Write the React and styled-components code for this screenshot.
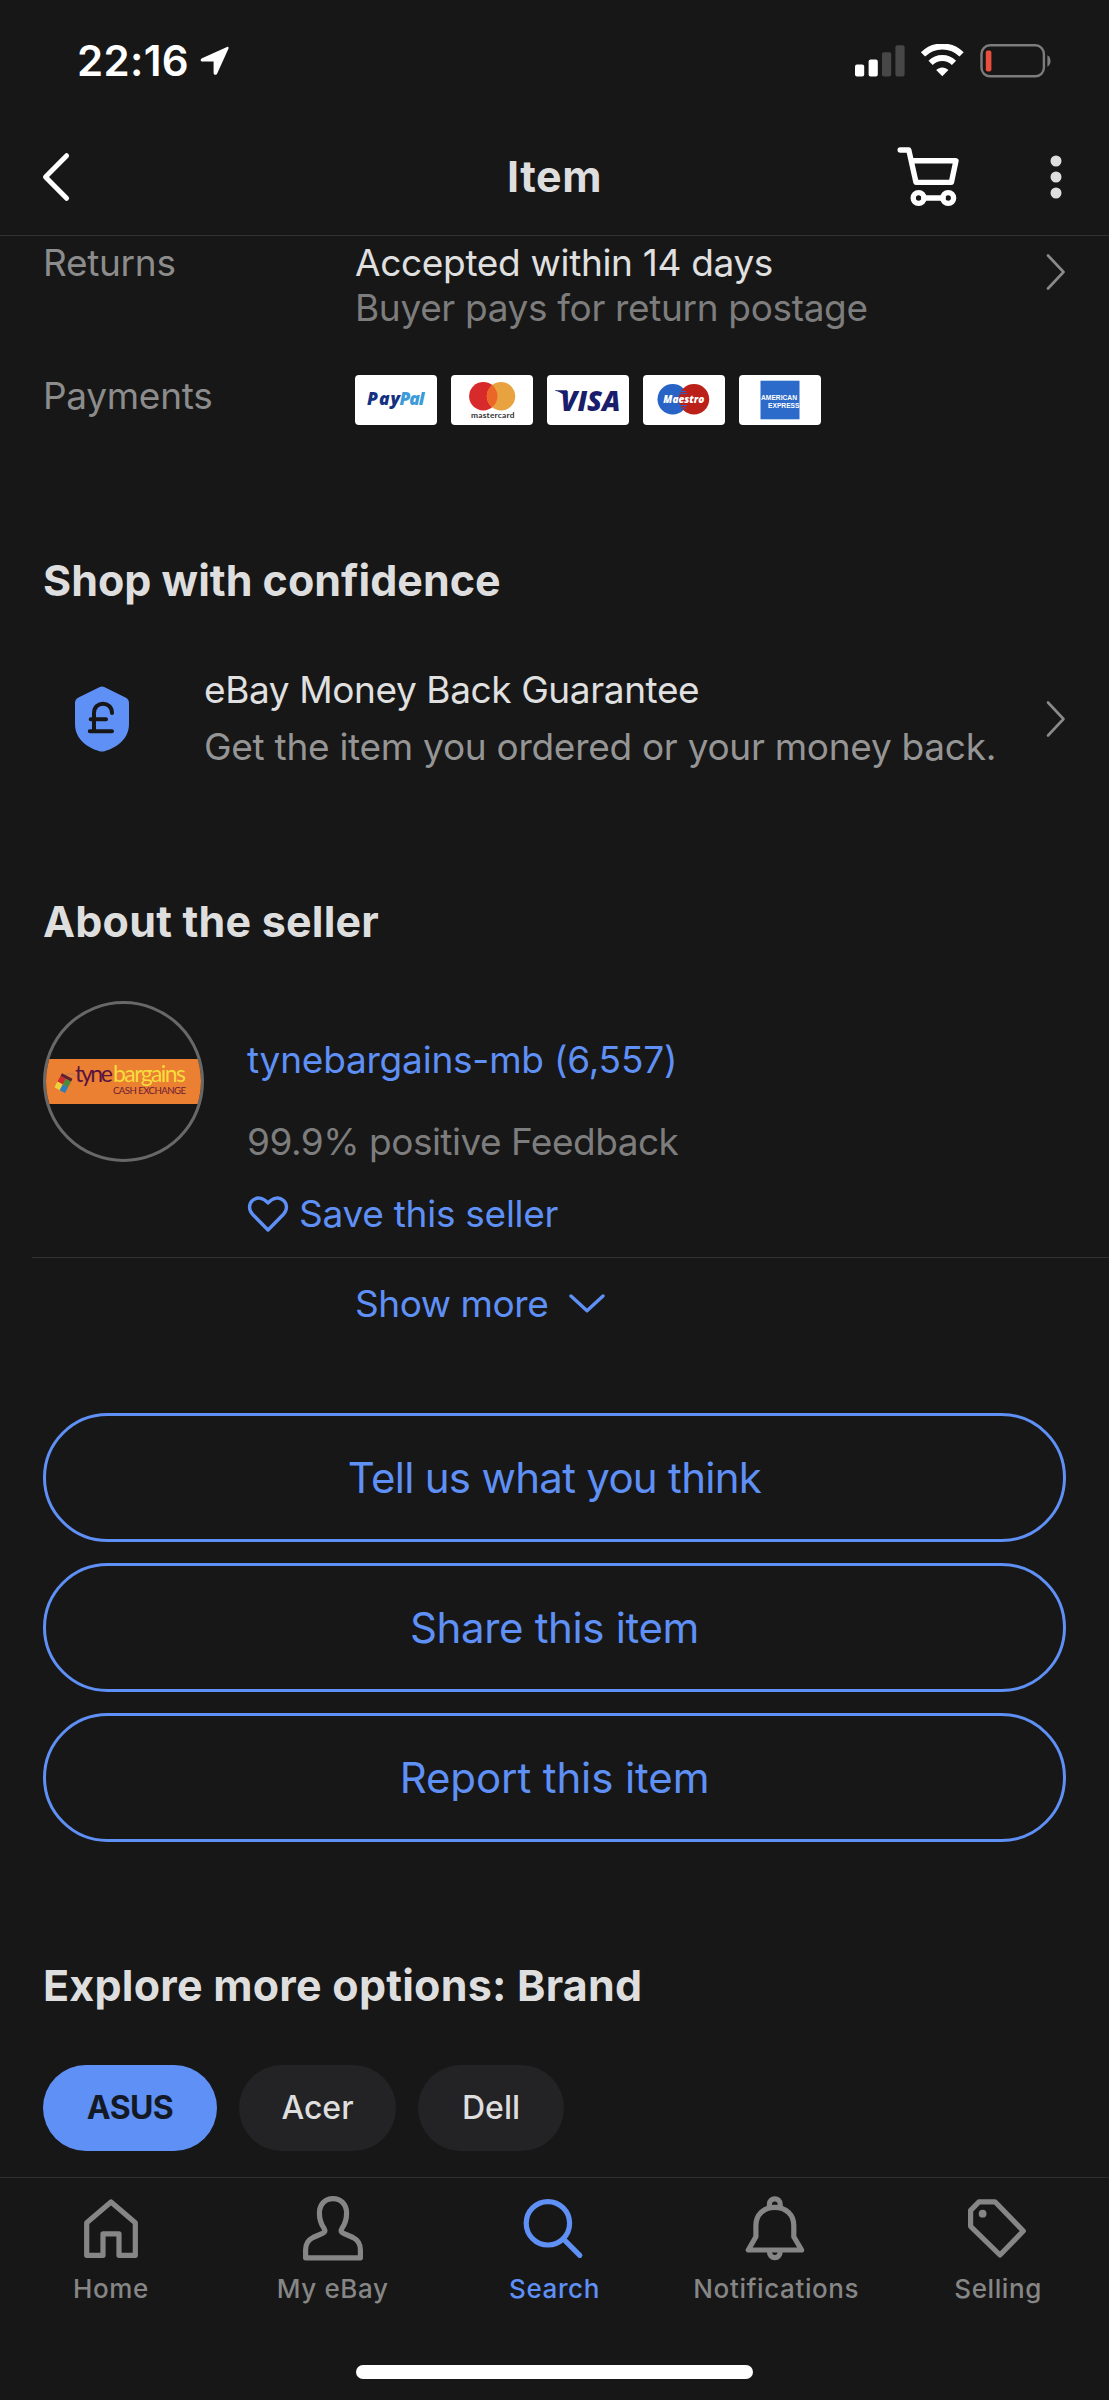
import React, { Component } from "react";
import styled, { createGlobalStyle } from "styled-components";

const blue = "#5f90f6";

const tabs = [
  { name: "Home" },
  { name: "My eBay" },
  { name: "Search", active: true },
  { name: "Notifications" },
  { name: "Selling" }
];

const brands = [
  { name: "ASUS", width: "174px", active: true },
  { name: "Acer", width: "157px" },
  { name: "Dell", width: "146px" }
];

const Chevron = () => (
  <svg width="20" height="38" viewBox="0 0 20 38" fill="none">
    <path
      d="M2 2.5L17.5 19L2 35.5"
      stroke="#8a8a8a"
      strokeWidth="2.6"
      strokeLinecap="round"
      strokeLinejoin="round"
    />
  </svg>
);

const TabIcon = ({ name }) => (
  <svg
    width="72"
    height="72"
    viewBox="0 0 72 72"
    fill="none"
    stroke="currentColor"
    strokeWidth="5.2"
    strokeLinecap="round"
    strokeLinejoin="round"
  >
    {name === "Home" && (
      <path d="M36 10L60.3 30.8V63.3H44V41.8H28V63.3H11.7V30.8Z" />
    )}
    {name === "My eBay" && (
      <path d="M36 6.6C28 6.6 22.4 12.5 22.4 21C22.4 28 24.3 32.5 27 36.3C28.6 38.8 28 40.2 25.5 41.3L16 45.5C11 48 8.6 52 8.6 58V65.8H63.4V58C63.4 52 61 48 56 45.5L46.5 41.3C44 40.2 43.4 38.8 45 36.3C47.7 32.5 49.6 28 49.6 21C49.6 12.5 44 6.6 36 6.6Z" />
    )}
    {name === "Search" && (
      <>
        <circle cx="29.9" cy="31.3" r="21.7" />
        <path d="M45.8 47.3L61.8 63.3" />
      </>
    )}
    {name === "Notifications" && (
      <>
        <path d="M34.8 15.3C23.5 15.3 15.9 23 15.9 33.5V44.8L8.3 58H61.6L53.8 44.8V33.5C53.8 23 46 15.3 34.8 15.3Z" />
        <path d="M29.4 14V12.2C29.4 5 40.2 5 40.2 12.2V14M29.4 59.5C29.4 67.6 40.2 67.6 40.2 59.5" />
      </>
    )}
    {name === "Selling" && (
      <>
        <path d="M17 9.8H33L61.3 39L38 63L8.6 34.3V18.3Z" />
        <circle cx="20.6" cy="21.7" r="3.9" fill="currentColor" stroke="none" />
      </>
    )}
  </svg>
);

const Cards = () => (
  <CardList>
    <Card viewBox="0 0 82 50">
      <text x="12" y="30" fontSize="17.5" textLength="33" fill="#143182">
        Pay
      </text>
      <text x="44.5" y="30" fontSize="17.5" textLength="25" fill="#3c9bd8">
        Pal
      </text>
    </Card>
    <Card viewBox="0 0 82 50">
      <circle cx="32.3" cy="21.2" r="14.2" fill="#d92a2b" />
      <circle cx="50" cy="21.2" r="14.2" fill="#e8a23f" />
      <path
        d="M41.15 10.1A14.2 14.2 0 0 1 41.15 32.3A14.2 14.2 0 0 1 41.15 10.1Z"
        fill="#ec6627"
      />
      <SmallMark x="20" y="42.6" textLength="43.5">
        mastercard
      </SmallMark>
    </Card>
    <Card viewBox="0 0 82 50">
      <path d="M8 15.3H20V19H15.5C13.5 17.3 11 16.2 8 15.7Z" fill="#1a1c6c" />
      <text
        x="13.5"
        y="35.5"
        fontSize="28"
        textLength="60"
        lengthAdjust="spacingAndGlyphs"
        fill="#1a1c6c"
      >
        VISA
      </text>
    </Card>
    <Card viewBox="0 0 82 50">
      <circle cx="29.7" cy="24.3" r="15.2" fill="#2863c6" />
      <circle cx="51" cy="24.3" r="15.2" fill="#bb2118" />
      <path
        d="M37 16.5H43M36 18.7H44M36 30.5H44M37 33H43"
        stroke="#2863c6"
        strokeWidth="1"
      />
      <text
        x="20.3"
        y="28"
        fontSize="11"
        textLength="41"
        lengthAdjust="spacingAndGlyphs"
        fill="#fff"
      >
        Maestro
      </text>
    </Card>
    <Card viewBox="0 0 82 50">
      <rect x="21.5" y="5.7" width="39" height="38.6" fill="#2c6bc9" />
      <AmexMark x="22" y="24.5" textLength="36" lengthAdjust="spacingAndGlyphs">
        AMERICAN
      </AmexMark>
      <AmexMark x="29" y="32.5" textLength="31.5" lengthAdjust="spacingAndGlyphs">
        EXPRESS
      </AmexMark>
    </Card>
  </CardList>
);

class App extends Component {
  render() {
    return (
      <Page>
        <GlobalStyle />
        <StatusBar>
          <Clock>
            22:16
            <svg width="30" height="30" viewBox="0 0 30 30">
              <path
                d="M27 1L2 12.2C0 13.2 0.3 15.6 2.6 15.6H13.6V26.8C13.6 29.2 16.2 29.6 17.2 27.4L28.4 2.8C29 1.4 28.2 0.5 27 1Z"
                fill="#fff"
              />
            </svg>
          </Clock>
          <svg width="197" height="34" viewBox="0 0 197 34">
            <rect x="1" y="20.5" width="9.2" height="12" rx="2" fill="#fff" />
            <rect x="14.6" y="15.4" width="9.2" height="17" rx="2" fill="#fff" />
            <rect x="28" y="8.2" width="9.2" height="24.3" rx="2" fill="#474747" />
            <rect x="41.4" y="1.2" width="9.2" height="31.3" rx="2" fill="#474747" />
            <g fill="none" stroke="#fff" strokeWidth="6">
              <path d="M69 10.4A27.5 27.5 0 0 1 107.6 10.4" />
              <path d="M76.6 18.9A16.6 16.6 0 0 1 100 18.9" />
            </g>
            <path
              d="M88.3 32.3L82.2 26C85.6 22.6 91 22.6 94.4 26Z"
              fill="#fff"
            />
            <rect
              x="127.5"
              y="1.3"
              width="62.4"
              height="31"
              rx="8.5"
              fill="none"
              stroke="#7c7c7c"
              strokeWidth="2.4"
            />
            <rect x="131.8" y="6.5" width="5.6" height="21" rx="2" fill="#e84f3d" />
            <path d="M193.4 11.3C197.6 13.3 197.6 20.7 193.4 22.7Z" fill="#7c7c7c" />
          </svg>
        </StatusBar>
        <Header>
          <HeaderSide>
            <svg width="30" height="50" viewBox="0 0 30 50" fill="none">
              <path
                d="M25.6 3.7L4.5 25L25.6 46.3"
                stroke="#fff"
                strokeWidth="5"
                strokeLinecap="round"
                strokeLinejoin="round"
              />
            </svg>
          </HeaderSide>
          <Title>Item</Title>
          <HeaderSide $end>
            <svg
              width="62"
              height="60"
              viewBox="0 0 62 60"
              fill="none"
              stroke="#fff"
              strokeWidth="5.4"
              strokeLinecap="round"
              strokeLinejoin="round"
            >
              <path d="M3.2 3H11.8L19 35.4H54.4L59 13.8H14.5" />
              <path d="M27 51H46" />
              <circle cx="21.6" cy="51" r="5.4" />
              <circle cx="51.2" cy="51" r="5.4" />
            </svg>
            <svg width="12" height="46" viewBox="0 0 12 46" fill="#dedede">
              <circle cx="6" cy="7" r="5.5" />
              <circle cx="6" cy="23" r="5.5" />
              <circle cx="6" cy="39" r="5.5" />
            </svg>
          </HeaderSide>
        </Header>

        <Content>
          <DetailRow>
            <Label>Returns</Label>
            <DetailText>
              <Line $color="#e0e0e0" $spacing="-0.32px">
                Accepted within 14 days
              </Line>
              <Line $color="#7d7d7d" $spacing="-0.34px">
                Buyer pays for return postage
              </Line>
            </DetailText>
            <Chevron />
          </DetailRow>
          <DetailRow $payments>
            <Label>Payments</Label>
            <Cards />
          </DetailRow>

          <Heading $top="128px">Shop with confidence</Heading>
          <Guarantee>
            <svg width="54" height="66" viewBox="0 0 54 66" fill="none">
              <path
                d="M24.8 1.1Q27 0 29.2 1.1L50.5 11.5Q54 13.3 54 17V38C54 51.5 44 61 29.5 65.2Q27 66 24.5 65.2C10 61 0 51.5 0 38V17Q0 13.3 3.5 11.5Z"
                fill={blue}
              />
              <path
                d="M37 27C37 14.5 19 14.5 19 27V45.3M15.7 33.3H31M14.8 45.3H37"
                stroke="#171717"
                strokeWidth="4"
                strokeLinecap="round"
              />
            </svg>
            <GuaranteeText>
              <Line $height="56px" $color="#e0e0e0" $spacing="-0.4px">
                eBay Money Back Guarantee
              </Line>
              <Line $height="57px" $color="#959595" $spacing="-0.28px">
                Get the item you ordered or your money back.
              </Line>
            </GuaranteeText>
            <Chevron />
          </Guarantee>

          <Heading $top="119px" $spacing="0.2px">
            About the seller
          </Heading>
          <Seller>
            <Avatar>
              <svg width="155" height="45" viewBox="0 0 155 45">
                <rect width="155" height="45" fill="#eb7f32" />
                <path
                  d="M15 22C17 14 27 12 33 20"
                  fill="none"
                  stroke="#c97b52"
                  strokeWidth="1.5"
                />
                <g transform="rotate(28 17 25)">
                  <rect x="11" y="19" width="6" height="6.5" fill="#d02b2b" />
                  <rect x="17" y="19" width="6" height="6.5" fill="#4a8a3c" />
                  <rect x="11" y="25.5" width="6" height="6.5" fill="#ecd23c" />
                  <rect x="17" y="25.5" width="6" height="6.5" fill="#2f7dbb" />
                  <rect x="11" y="16" width="12" height="3" fill="#5d2035" />
                </g>
                <LogoText x="29" y="23" fontSize="23" textLength="38" fill="#5a1440">
                  tyne
                </LogoText>
                <LogoText x="67" y="23" fontSize="23" textLength="73" fill="#f6dc3c">
                  bargains
                </LogoText>
                <LogoText x="67" y="35" fontSize="9.6" textLength="73" fill="#6b1c35">
                  CASH EXCHANGE
                </LogoText>
              </svg>
            </Avatar>
            <SellerInfo>
              <Line $height="46px" $color={blue} $spacing="-0.22px">
                tynebargains-mb (6,557)
              </Line>
              <Line $height="46px" $color="#7d7d7d" $spacing="-0.5px">
                99.9% positive Feedback
              </Line>
              <SaveSeller>
                <svg width="42" height="38" viewBox="0 0 42 38" fill="none">
                  <path
                    d="M21 35L5.5 19.2C-3.5 9.5 10 -4.5 21 8C32 -4.5 45.5 9.5 36.5 19.2Z"
                    stroke={blue}
                    strokeWidth="3.4"
                    strokeLinejoin="round"
                  />
                </svg>
                <Line $height="46px" $color={blue} $spacing="-0.26px">
                  Save this seller
                </Line>
              </SaveSeller>
            </SellerInfo>
          </Seller>
          <Divider />
          <ShowMore>
            <Line $height="46px" $color={blue} $spacing="-0.45px">
              Show more
            </Line>
            <svg width="36" height="20" viewBox="0 0 36 20" fill="none">
              <path
                d="M2 2L18 16.8L34 2"
                stroke={blue}
                strokeWidth="3.4"
                strokeLinecap="round"
                strokeLinejoin="round"
              />
            </svg>
          </ShowMore>

          <ButtonList>
            <OutlineButton $spacing="-0.7px">Tell us what you think</OutlineButton>
            <OutlineButton $spacing="-0.35px">Share this item</OutlineButton>
            <OutlineButton $spacing="-0.1px">Report this item</OutlineButton>
          </ButtonList>

          <Heading $top="116px" $spacing="0.23px">
            Explore more options: Brand
          </Heading>
          <BrandList>
            {brands.map(brand => (
              <Brand key={brand.name} $width={brand.width} $active={brand.active}>
                {brand.name}
              </Brand>
            ))}
          </BrandList>
        </Content>

        <TabBar>
          {tabs.map(tab => (
            <Tab key={tab.name} $active={tab.active}>
              <TabIcon name={tab.name} />
              {tab.name}
            </Tab>
          ))}
        </TabBar>
        <HomeIndicator />
      </Page>
    );
  }
}

const GlobalStyle = createGlobalStyle`
  * {
    box-sizing: border-box;
  }
  body {
    margin: 0;
    background-color: #171717;
  }
  svg {
    display: block;
    flex-shrink: 0;
  }
`;

const Page = styled.div`
  display: flex;
  flex-direction: column;
  width: 1109px;
  height: 2400px;
  overflow: hidden;
  background-color: #171717;
  font-family: Inter, "Liberation Sans", sans-serif;
`;

const StatusBar = styled.div`
  display: flex;
  justify-content: space-between;
  align-items: center;
  height: 118px;
  padding: 3px 58px 0 77px;
`;

const Clock = styled.div`
  display: flex;
  align-items: center;
  gap: 11px;
  color: #ffffff;
  font-size: 42px;
  font-weight: 600;
  line-height: 50px;
  letter-spacing: 0.3px;
`;

const Header = styled.header`
  display: flex;
  justify-content: space-between;
  align-items: center;
  height: 118px;
  padding: 0 47px 0 41px;
  border-bottom: 1px solid #323232;
`;

const HeaderSide = styled.div`
  display: flex;
  justify-content: ${props => (props.$end ? "flex-end" : "flex-start")};
  align-items: center;
  gap: 91px;
  flex: 1 1 0;
`;

const Title = styled.h1`
  margin: 0 -6px 1px 0;
  color: #dedede;
  font-size: 43px;
  font-weight: 700;
  line-height: 54px;
  letter-spacing: 0.5px;
`;

const Content = styled.main`
  flex: 1;
  padding: 4px 43px 0;
`;

const DetailRow = styled.div`
  display: flex;
  align-items: ${props => (props.$payments ? "flex-end" : "flex-start")};
  height: ${props => (props.$payments ? "52px" : "90px")};
  margin-top: ${props => (props.$payments ? "43px" : "0")};

  > svg {
    margin-top: 13px;
  }
`;

const Label = styled.div`
  align-self: flex-start;
  width: 312px;
  color: #8c8c8c;
  font-size: 37px;
  line-height: 45px;
  letter-spacing: -0.3px;
`;

const DetailText = styled.div`
  flex: 1;
`;

const Line = styled.div`
  color: ${props => props.$color};
  font-size: 37px;
  line-height: ${props => props.$height || "45px"};
  letter-spacing: ${props => props.$spacing};
  white-space: nowrap;
`;

const CardList = styled.div`
  display: flex;
  gap: 14px;
`;

const Card = styled.svg`
  width: 82px;
  height: 50px;
  border-radius: 4px;
  background-color: #ffffff;
  font-family: "Open Sans", sans-serif;
  font-weight: 800;
  font-style: italic;
`;

const SmallMark = styled.text`
  fill: #333333;
  font-family: Lato, sans-serif;
  font-size: 8.4px;
  font-style: normal;
  font-weight: 700;
`;

const AmexMark = styled.text`
  fill: #ffffff;
  font-family: "Liberation Sans", sans-serif;
  font-size: 7.4px;
  font-style: normal;
  font-weight: 700;
`;

const LogoText = styled.text`
  font-family: Lato, sans-serif;
`;

const Heading = styled.h2`
  margin: ${props => props.$top} 0 0;
  color: #dedede;
  font-size: 43px;
  font-weight: 700;
  line-height: 54px;
  letter-spacing: ${props => props.$spacing || "0"};
  white-space: nowrap;
`;

const Guarantee = styled.div`
  display: flex;
  align-items: center;
  height: 113px;
  margin-top: 55px;
  padding-left: 32px;
`;

const GuaranteeText = styled.div`
  flex: 1;
  margin-left: 75px;
`;

const Seller = styled.div`
  display: flex;
  height: 256px;
  margin-top: 53px;
`;

const Avatar = styled.div`
  display: flex;
  justify-content: center;
  align-items: center;
  width: 161px;
  height: 161px;
  border: 3px solid #686868;
  border-radius: 50%;
  overflow: hidden;
`;

const SellerInfo = styled.div`
  display: flex;
  flex-direction: column;
  gap: 36px;
  padding-top: 36px;
  margin-left: 43px;
`;

const SaveSeller = styled.div`
  display: flex;
  align-items: center;
  gap: 10px;
  margin-top: -10px;
`;

const Divider = styled.div`
  height: 1px;
  margin: 0 -43px 0 -11px;
  background-color: #323232;
`;

const ShowMore = styled.div`
  display: flex;
  align-items: center;
  gap: 21px;
  margin-top: 23px;
  padding-left: 312px;
`;

const ButtonList = styled.div`
  display: flex;
  flex-direction: column;
  gap: 21px;
  margin-top: 86px;
`;

const OutlineButton = styled.button`
  height: 129px;
  border: 3px solid ${blue};
  border-radius: 65px;
  background-color: transparent;
  color: ${blue};
  font-family: inherit;
  font-size: 42px;
  line-height: 50px;
  letter-spacing: ${props => props.$spacing};
`;

const BrandList = styled.div`
  display: flex;
  gap: 22px;
  margin-top: 53px;
`;

const Brand = styled.div`
  width: ${props => props.$width};
  border-radius: 43px;
  background-color: ${props => (props.$active ? blue : "#232325")};
  color: ${props => (props.$active ? "#131a26" : "#dedede")};
  font-size: 32px;
  font-weight: ${props => (props.$active ? 700 : 500)};
  line-height: 86px;
  letter-spacing: ${props => (props.$active ? "-0.6px" : "0")};
  text-align: center;
`;

const TabBar = styled.nav`
  display: flex;
  height: 188px;
  padding-top: 14px;
  border-top: 1px solid #2e2e2e;
`;

const Tab = styled.div`
  display: flex;
  flex-direction: column;
  align-items: center;
  gap: 9px;
  flex: 1 1 0;
  min-width: 0;
  color: ${props => (props.$active ? blue : "#868686")};
  font-size: 26px;
  font-weight: 500;
  line-height: 32px;
  letter-spacing: 0.6px;
`;

const HomeIndicator = styled.div`
  width: 397px;
  height: 14px;
  margin: 0 auto 21px;
  border-radius: 7px;
  background-color: #ffffff;
`;

export default App;
